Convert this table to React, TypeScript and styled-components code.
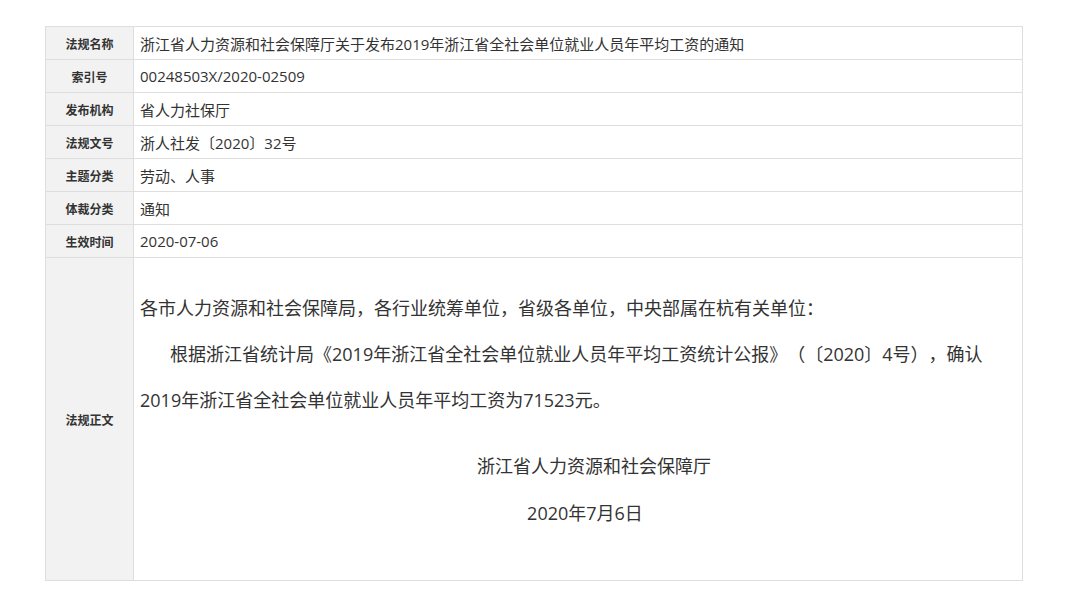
import React, { FunctionComponent } from 'react';
import styled, { createGlobalStyle } from 'styled-components';

const GlobalStyle = createGlobalStyle`
  html, body {
    margin: 0;
    padding: 0;
    background: #ffffff;
  }
  body {
    font-family: "Open Sans", "Noto Sans CJK SC", "Microsoft YaHei", sans-serif;
    color: #333333;
    text-spacing-trim: space-all;
  }
`;

const Table = styled.div`
  display: grid;
  grid-template-columns: 88px 1fr;
  width: 977px;
  margin: 26px 0 0 45px;
  border-top: 1px solid #dedede;
  border-left: 1px solid #dedede;
`;

const Label = styled.div`
  display: flex;
  align-items: center;
  justify-content: center;
  background: #f2f2f2;
  border-right: 1px solid #dedede;
  border-bottom: 1px solid #dedede;
  font-family: "Noto Sans CJK SC", sans-serif;
  font-size: 12px;
  font-weight: bold;
  color: #333333;
`;

const Value = styled.div`
  display: flex;
  align-items: center;
  height: 32px;
  padding: 0 6px;
  border-right: 1px solid #dedede;
  border-bottom: 1px solid #dedede;
  font-size: 15px;
  color: #333333;
  white-space: nowrap;
`;

const Body = styled.div`
  padding: 27px 4px 43px 6px;
  border-right: 1px solid #dedede;
  border-bottom: 1px solid #dedede;
  font-size: 18px;
  line-height: 46px;
  color: #333333;
`;

const Para = styled.p<{ $indent?: boolean }>`
  margin: 0;
  text-indent: ${p => (p.$indent ? '30px' : '0')};
`;

const Signature = styled.p<{ $shift: number; $gap: number }>`
  margin: ${p => p.$gap}px 0 0;
  padding-left: ${p => p.$shift}px;
  text-align: center;
  line-height: 47px;
`;

const rows: [string, string][] = [
  ['法规名称', '浙江省人力资源和社会保障厅关于发布2019年浙江省全社会单位就业人员年平均工资的通知'],
  ['索引号', '00248503X/2020-02509'],
  ['发布机构', '省人力社保厅'],
  ['法规文号', '浙人社发〔2020〕32号'],
  ['主题分类', '劳动、人事'],
  ['体裁分类', '通知'],
  ['生效时间', '2020-07-06'],
];

const App: FunctionComponent = () => {
  return <>
    <GlobalStyle />
    <Table>
      {rows.map(([label, value]) => <React.Fragment key={label}>
        <Label>{label}</Label>
        <Value>{value}</Value>
      </React.Fragment>)}
      <Label>法规正文</Label>
      <Body>
        <Para>各市人力资源和社会保障局，各行业统筹单位，省级各单位，中央部属在杭有关单位：</Para>
        <Para $indent>根据浙江省统计局《2019年浙江省全社会单位就业人员年平均工资统计公报》（〔2020〕4号），确认<br />2019年浙江省全社会单位就业人员年平均工资为71523元。</Para>
        <Signature $shift={30} $gap={20}>浙江省人力资源和社会保障厅</Signature>
        <Signature $shift={12} $gap={0}>2020年7月6日</Signature>
      </Body>
    </Table>
  </>
}

export default App;
